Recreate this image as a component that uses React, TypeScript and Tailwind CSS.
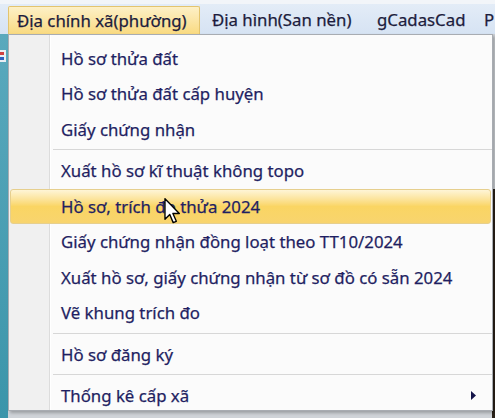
import React from "react";

type Item = { label: string; sep?: false; active?: boolean; sub?: boolean } | { sep: true };

const items: Item[] = [
  { label: "Hồ sơ thửa đất" },
  { label: "Hồ sơ thửa đất cấp huyện" },
  { label: "Giấy chứng nhận" },
  { sep: true },
  { label: "Xuất hồ sơ kĩ thuật không topo" },
  { label: "Hồ sơ, trích đo thửa 2024", active: true },
  { label: "Giấy chứng nhận đồng loạt theo TT10/2024" },
  { label: "Xuất hồ sơ, giấy chứng nhận từ sơ đồ có sẵn 2024" },
  { label: "Vẽ khung trích đo" },
  { sep: true },
  { label: "Hồ sơ đăng ký" },
  { sep: true },
  { label: "Thống kê cấp xã", sub: true },
];

export default function App() {
  return (
    <div
      className="relative w-[495px] h-[418px] overflow-hidden bg-[#cfd3d8] text-[16.8px] text-[#1f1f62] [-webkit-text-stroke:0.25px_currentColor]"
      style={{ fontFamily: '"Noto Sans", "Open Sans", sans-serif' }}
    >
      {/* top strip */}
      <div className="h-[4px] bg-[#f2f5f9]" />
      {/* menu bar */}
      <div className="flex h-[30px] items-stretch bg-gradient-to-b from-[#e3ecf7] to-[#d6e3f3] text-[#1c1c3c]">
        <div className="w-[8px]" />
        <div className="mt-[2px] flex w-[192px] items-center rounded-t-[2px] border border-b-0 border-[#e3c46e] bg-gradient-to-b from-[#fdf0c6] to-[#f9da80] pl-[8px]">
          Địa chính xã(phường)
        </div>
        <div className="flex w-[165px] items-center pl-[12px] pt-[2px]">Địa hình(San nền)</div>
        <div className="flex w-[107px] items-center pl-[12px] pt-[2px]">gCadasCad</div>
        <div className="flex items-center pl-[12px] pt-[2px]">P</div>
      </div>

      {/* background app area */}
      <div className="flex h-[384px]">
        <div className="flex w-[8px] flex-col bg-gradient-to-b from-[#5aa9bd] to-[#3b95aa]">
          <div className="mt-[16px] h-[12px] w-[6px] bg-[#e8eef4]">
            <div className="mt-[2px] h-[3px] w-[4px] bg-[#d04040]" />
            <div className="mt-[2px] h-[3px] w-[4px] bg-[#3060c0]" />
          </div>
        </div>
        <div className="flex-1" />
        <div className="mt-[155px] w-[3px] bg-[#2a2118]" />
      </div>

      {/* dropdown */}
      <div className="absolute left-[8px] top-[34px] w-[485px] border border-[#a8acb2] bg-[#fbfbfb] pt-[5px] shadow-[2px_2px_3px_rgba(0,0,0,0.25)]">
        <div className="pointer-events-none absolute bottom-0 left-0 top-0 w-[41px] border-r border-[#dcdcdc] bg-[#f0f0f0]">
          <div className="absolute right-[-2px] top-0 bottom-0 w-px bg-white" />
        </div>
        <div className="relative flex flex-col">
          {items.map((it, i) =>
            it.sep ? (
              <div key={i} className="flex h-[6px] items-center pl-[44px]">
                <div className="h-px flex-1 bg-[#d7d7d7]" />
              </div>
            ) : (
              <div
                key={i}
                className={
                  it.sub
                    ? "relative flex h-[32px] items-start px-[2px]"
                    : "relative flex h-[35.5px] items-center px-[2px]"
                }
              >
                {it.active && (
                  <div className="absolute inset-x-[1px] top-[1px] bottom-[0px] rounded-[3px] border border-[#e6cf8e] bg-gradient-to-b from-[#fef5d6] via-[#fad563] to-[#f8d46e]" />
                )}
                <span className={it.sub ? "relative pl-[50px] pt-[5px]" : "relative pl-[50px] pt-[1px]"}>
                  {it.label}
                </span>
                {it.sub && (
                  <svg className="absolute right-[16px] top-[13px]" width="5" height="9" viewBox="0 0 5 9">
                    <path d="M0 0 L5 4.5 L0 9 Z" fill="#14144a" />
                  </svg>
                )}
              </div>
            )
          )}
        </div>
        {/* mouse cursor */}
        <svg
          className="absolute left-[155px] top-[163px]"
          width="17"
          height="26"
          viewBox="0 0 12 19"
        >
          <path
            d="M0.5 0.5 L0.5 15.5 L4 12 L6.5 18 L8.8 17 L6.3 11.3 L11 11.3 Z"
            fill="#ffffff"
            stroke="#000000"
            strokeWidth="1"
            strokeLinejoin="round"
          />
        </svg>
      </div>
    </div>
  );
}
